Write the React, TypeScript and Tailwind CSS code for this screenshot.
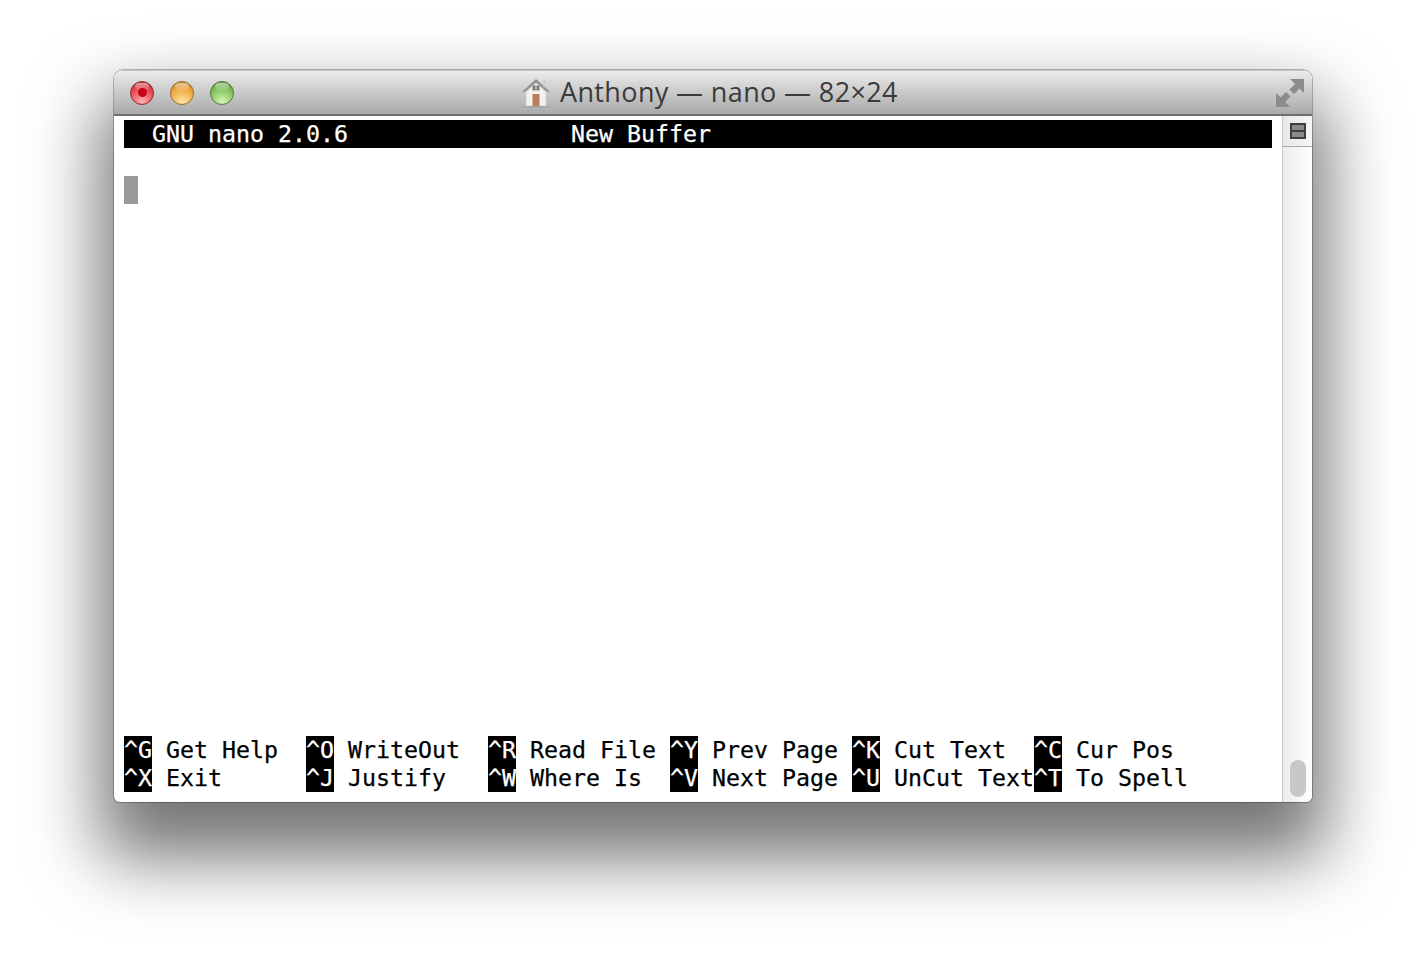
const shortcuts = [
  [["^G", "Get Help"], ["^O", "WriteOut"], ["^R", "Read File"], ["^Y", "Prev Page"], ["^K", "Cut Text"], ["^C", "Cur Pos"]],
  [["^X", "Exit"], ["^J", "Justify"], ["^W", "Where Is"], ["^V", "Next Page"], ["^U", "UnCut Text"], ["^T", "To Spell"]],
];

function HouseIcon() {
  return (
    <svg width="30" height="32" viewBox="0 0 30 32">
      <path d="M1 16 L15 3 L29 16 L26.5 16 L15 6.5 L3.5 16 Z" fill="#8f8f8f" />
      <rect x="22" y="4" width="3" height="7" fill="#cfcfcf" />
      <path d="M5 16 L15 7 L25 16 V30 H5 Z" fill="#f4f2ee" stroke="#c9c7c3" strokeWidth="0.5" />
      <rect x="11.5" y="9.5" width="7" height="5" fill="#7d7a76" />
      <rect x="14.5" y="9.5" width="1" height="5" fill="#e8e8e8" />
      <rect x="11.5" y="18" width="7" height="12" fill="#b9805f" />
      <rect x="1" y="30" width="28" height="1.5" fill="#a3a3a3" />
    </svg>
  );
}

function ZoomIcon() {
  return (
    <svg width="30" height="30" viewBox="0 0 30 30">
      <path d="M15 1 H29 V15 L24.5 10.5 L19 16 L14.5 11.5 L20 6 Z" fill="#8b8b8b" />
      <path d="M1 15 L5.5 19.5 L11 14 L15.5 18.5 L10 24 L15 29 H1 Z" fill="#8b8b8b" />
    </svg>
  );
}

function Light({ color, dot }: { color: string; dot?: boolean }) {
  return (
    <div className={`relative w-6 h-6 rounded-full flex items-center justify-center ${color}`}>
      <div className="absolute top-[1px] left-[4px] w-[14px] h-[8px] rounded-full bg-gradient-to-b from-white/50 to-white/5" />
      {dot && <div className="relative w-[9px] h-[9px] rounded-full bg-[#c80018]" />}
    </div>
  );
}

export default function App() {
  return (
    <div className="h-[960px] bg-white pl-[114px] pt-[70px] overflow-hidden">
      <div className="w-[1198px] h-[732px] rounded-t-[9px] rounded-b-[6px] bg-white flex flex-col shadow-[0_0_0_1px_rgba(0,0,0,0.25),0_42px_70px_14px_rgba(0,0,0,0.55)] overflow-hidden">
        <div className="h-[46px] shrink-0 flex items-center relative bg-gradient-to-b from-[#ebebeb] to-[#a9a9a9] border-t border-[#c4c4c4] border-b-2 border-b-[#6f6f6f]">
          <div className="flex gap-4 ml-4">
            <Light color="bg-[radial-gradient(circle_at_50%_90%,#ffb0b0,#e5474f_60%,#a52a32)] border border-[#8a2a30]" dot />
            <Light color="bg-[radial-gradient(circle_at_50%_90%,#ffe4a8,#efa63c_60%,#a87524)] border border-[#94702a]" />
            <Light color="bg-[radial-gradient(circle_at_50%_90%,#d8f2b8,#7fc25a_60%,#528a36)] border border-[#4d7a38]" />
          </div>
          <div className="absolute left-[407px] top-[5px] flex items-center gap-[9px] text-[27px] leading-[32px] tracking-[0.37px] text-[#3a3a3a] whitespace-nowrap font-['Open_Sans',sans-serif]">
            <HouseIcon />
            <span>Anthony — nano — 82×24</span>
          </div>
          <div className="ml-auto mr-[7px] mt-[1px]">
            <ZoomIcon />
          </div>
        </div>
        <div className="flex-1 flex min-h-0">
          <div className="flex-1 pl-[10px] pt-[4px] pb-[10px] flex flex-col font-['DejaVu_Sans_Mono',monospace] text-[23.25px] leading-[28px] text-black [-webkit-text-stroke:0.25px]">
            <div className="w-[1148px] h-7 bg-black text-white whitespace-pre flex">
              <span className="w-[447px]">{"  GNU nano 2.0.6"}</span>
              <span>New Buffer</span>
            </div>
            <div className="h-7" />
            <div className="w-[14px] h-7 bg-[#999999]" />
            <div className="mt-auto flex flex-col">
              {shortcuts.map((row, i) => (
                <div key={i} className="grid grid-cols-[repeat(6,182px)] h-7">
                  {row.map(([key, label]) => (
                    <div key={key} className="whitespace-pre flex">
                      <span className="w-7 bg-black text-white">{key}</span>
                      <span className="ml-[14px]">{label}</span>
                    </div>
                  ))}
                </div>
              ))}
            </div>
          </div>
          <div className="w-[30px] shrink-0 flex flex-col border-l border-[#c8c8c8] bg-gradient-to-r from-[#ececec] to-white">
            <div className="h-[31px] shrink-0 flex items-center justify-center bg-gradient-to-r from-[#e8e8e8] to-[#f6f6f6] border-b border-[#a8a8a8]">
              <div className="w-4 h-4 border-2 border-[#3f3f3f] bg-[#8a8a8a] flex items-center">
                <div className="w-full h-[2px] bg-[#3f3f3f]" />
              </div>
            </div>
            <div className="mt-auto mb-[5px] ml-[7px] w-4 h-[37px] rounded-full bg-[#c8c8c8]" />
          </div>
        </div>
      </div>
    </div>
  );
}
